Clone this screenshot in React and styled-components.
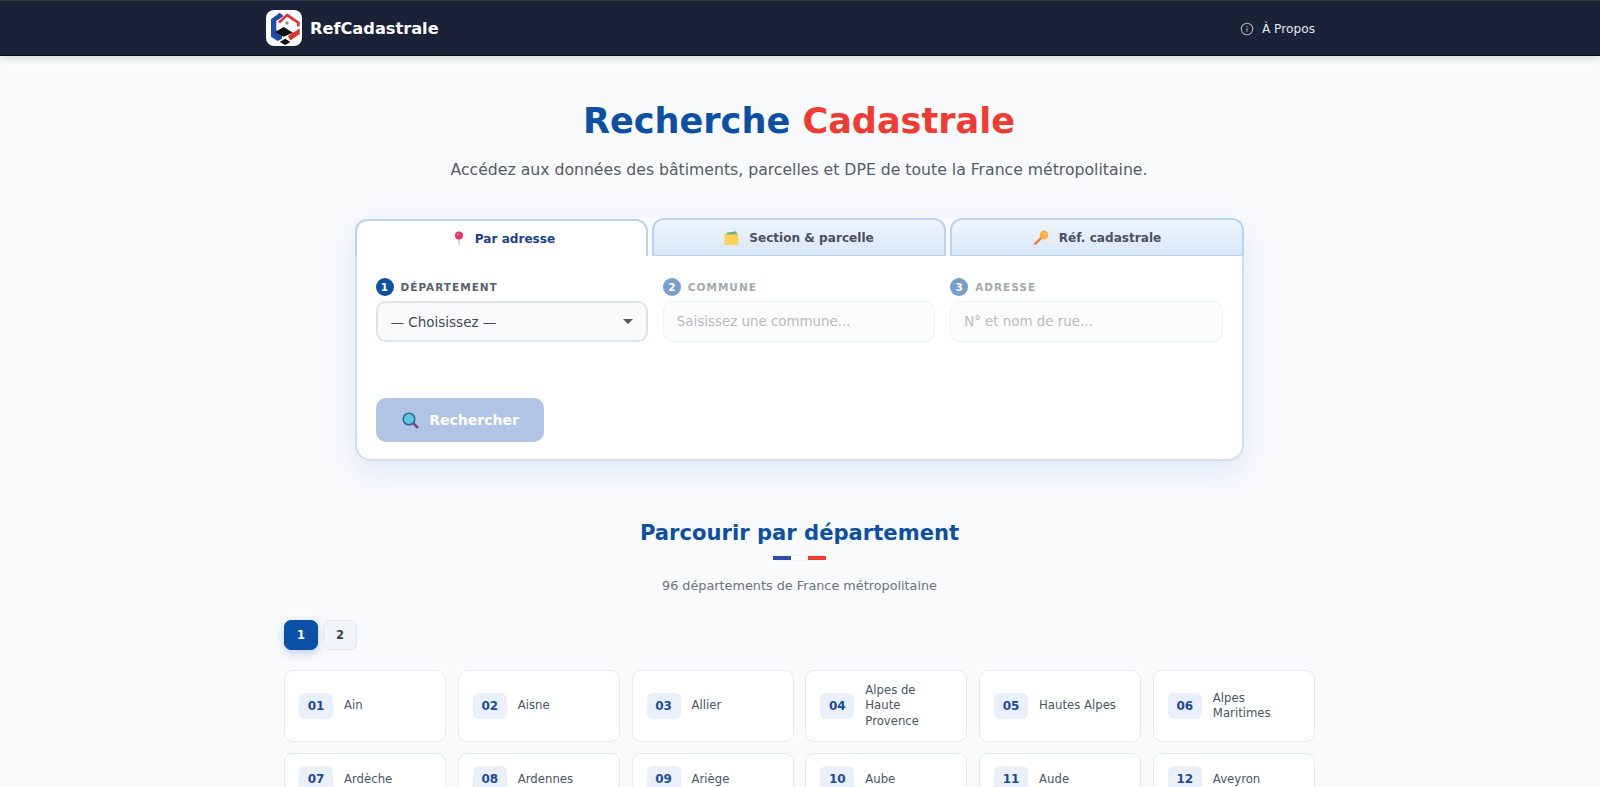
import styled, { createGlobalStyle } from 'styled-components';

const GlobalStyle = createGlobalStyle`
	* {
		box-sizing: border-box;
	}
	html,
	body {
		margin: 0;
		padding: 0;
	}
	body {
		font-family: 'DejaVu Sans', Verdana, sans-serif;
		background: #f8fafc;
		color: #374151;
	}
`;

const departments = [
	['01', 'Ain'],
	['02', 'Aisne'],
	['03', 'Allier'],
	['04', 'Alpes de Haute Provence'],
	['05', 'Hautes Alpes'],
	['06', 'Alpes Maritimes'],
	['07', 'Ardèche'],
	['08', 'Ardennes'],
	['09', 'Ariège'],
	['10', 'Aube'],
	['11', 'Aude'],
	['12', 'Aveyron'],
];

const Logo = () => (
	<LogoBox>
		<svg width="36" height="36" viewBox="0 0 36 36">
			<path fill="#1e4aa8" d="M13.7 2.7L17.7 6 10.3 11V20L16 25.3V28.7L11.7 31 5 26.7V9.3z" />
			<path fill="#e0322c" d="M11.7 12L21 3.3 33.7 12V16L31 16.7V13.3L21 6.7 14.3 13.3z" />
			<path fill="#e0322c" d="M22 26L33.7 18.5V24L24.3 30.5z" />
			<path fill="#8a8f98" d="M19.5 11.5h3v3h-3z" />
			<path fill="#111" d="M9.3 22L17.7 17 27 22.7 17.7 26.7z" />
			<path fill="#111" d="M13.7 32L19.3 28.7 24.3 32 19.3 35z" />
		</svg>
	</LogoBox>
);

const InfoIcon = () => (
	<svg width="14" height="14" viewBox="0 0 16 16" fill="none" stroke="#aeb4bf" strokeWidth="1.2">
		<circle cx="8" cy="8" r="6.6" />
		<path d="M8 7.2v4M8 4.6v1.2" />
	</svg>
);

const PinIcon = () => (
	<svg width="12" height="15" viewBox="0 0 14 18">
		<path fill="#a8aeb6" d="M6.2 8h1.6l-.4 10h-.8z" />
		<circle cx="7" cy="5.4" r="4.8" fill="#ec2f6c" />
		<circle cx="5.6" cy="4" r="1.2" fill="#f78fb0" />
	</svg>
);

const FolderIcon = () => (
	<svg width="15" height="14" viewBox="0 0 16 15">
		<path fill="#e9a93a" d="M1 3.4h14v10.6a1 1 0 01-1 1H2a1 1 0 01-1-1z" />
		<path fill="#6fb26a" d="M3 1.8L13 .4l1 3H2.4z" />
		<path fill="#fcd25c" d="M0.6 4h14.8v10a1 1 0 01-1 1H1.6a1 1 0 01-1-1z" />
	</svg>
);

const KeyIcon = () => (
	<svg width="16" height="16" viewBox="0 0 16 16">
		<path fill="#f0802c" d="M7.4 7L0.6 13.4l1.8 1.8 6.8-6.4z" />
		<circle cx="11" cy="5" r="4.4" fill="#fbb03b" />
		<circle cx="12" cy="3.8" r="1" fill="#fcd98d" />
	</svg>
);

const SearchIcon = () => (
	<svg width="17" height="17" viewBox="0 0 17 17">
		<path stroke="#8a3a88" strokeWidth="2.6" strokeLinecap="round" d="M11 11l4.2 4.2" />
		<circle cx="7" cy="7" r="5.8" fill="#55cbe0" stroke="#3c5f8e" strokeWidth="1.5" />
	</svg>
);

const App = () => {
	return (
		<>
			<GlobalStyle />
			<Page>
				<Navbar>
					<Brand>
						<Logo />
						<BrandName>RefCadastrale</BrandName>
					</Brand>
					<NavLink href="#apropos">
						<InfoIcon />À Propos
					</NavLink>
				</Navbar>

				<Main>
					<Hero>
						<Title>
							<span>Recherche</span> <em>Cadastrale</em>
						</Title>
						<Subtitle>
							Accédez aux données des bâtiments, parcelles et DPE de toute la France métropolitaine.
						</Subtitle>
					</Hero>

					<SearchCard>
						<Tabs>
							<Tab $active>
								<PinIcon />
								Par adresse
							</Tab>
							<Tab>
								<FolderIcon />
								Section &amp; parcelle
							</Tab>
							<Tab>
								<KeyIcon />
								Réf. cadastrale
							</Tab>
						</Tabs>
						<Panel>
							<Fields>
								<Field>
									<FieldLabel>
										<StepDot>1</StepDot>
										Département
									</FieldLabel>
									<SelectBox>
										— Choisissez —
										<Caret />
									</SelectBox>
								</Field>
								<Field $disabled>
									<FieldLabel>
										<StepDot>2</StepDot>
										Commune
									</FieldLabel>
									<TextInput placeholder="Saisissez une commune..." disabled />
								</Field>
								<Field $disabled>
									<FieldLabel>
										<StepDot>3</StepDot>
										Adresse
									</FieldLabel>
									<TextInput placeholder="N° et nom de rue..." disabled />
								</Field>
							</Fields>
							<SearchButton>
								<SearchIcon />
								Rechercher
							</SearchButton>
						</Panel>
					</SearchCard>

					<Browse>
						<BrowseHead>
							<BrowseTitle>Parcourir par département</BrowseTitle>
							<Tricolor>
								<i />
								<i />
								<i />
							</Tricolor>
							<BrowseSub>96 départements de France métropolitaine</BrowseSub>
						</BrowseHead>
						<Pagination>
							<PageButton $active>1</PageButton>
							<PageButton>2</PageButton>
						</Pagination>
						<DeptGrid>
							{departments.map(([code, name]) => (
								<DeptCard key={code}>
									<DeptCode>{code}</DeptCode>
									<DeptName>{name}</DeptName>
								</DeptCard>
							))}
						</DeptGrid>
					</Browse>
				</Main>
			</Page>
		</>
	);
};

export default App;

const Page = styled.div`
	height: 100vh;
	overflow: hidden;
	background: #f8fafc;
`;

const Navbar = styled.header`
	height: 56px;
	padding: 0 285px 0 266px;
	display: flex;
	align-items: center;
	justify-content: space-between;
	background: #1a2238;
	border-top: 1px solid #2b3a3e;
	border-bottom: 1px solid #0b0e16;
	box-shadow: 0 2px 8px rgba(0, 0, 0, 0.15);
`;

const Main = styled.main`
	width: 1598px;
`;

const Brand = styled.div`
	display: flex;
	align-items: center;
	gap: 8px;
`;

const LogoBox = styled.div`
	width: 36px;
	height: 36px;
	background: #fff;
	border-radius: 8px;
	overflow: hidden;

	svg {
		display: block;
	}
`;

const BrandName = styled.span`
	padding-top: 1px;
	font-size: 16.2px;
	font-weight: 700;
	color: #fff;
`;

const NavLink = styled.a`
	display: flex;
	align-items: center;
	gap: 8px;
	padding-top: 1px;
	font-size: 12.2px;
	color: #e2e6ee;
	text-decoration: none;
`;

const Hero = styled.section`
	padding-top: 44px;
	text-align: center;
`;

const Title = styled.h1`
	margin: 0;
	font-size: 35.1px;
	line-height: 42px;
	font-weight: 700;

	span {
		color: #0d4fa3;
	}
	em {
		font-style: normal;
		color: #ef3b32;
	}
`;

const Subtitle = styled.p`
	margin: 17px 0 0;
	font-size: 15.68px;
	line-height: 22px;
	color: #565c66;
`;

const SearchCard = styled.section`
	width: 889px;
	margin: 37px auto 0;
	border-radius: 16px;
	box-shadow: 0 10px 32px rgba(13, 79, 163, 0.1);
`;

const Tabs = styled.div`
	display: grid;
	grid-template-columns: 293px 294px 294px;
	gap: 4px;
	align-items: end;
	height: 38px;
`;

const Tab = styled.button`
	display: flex;
	align-items: center;
	justify-content: center;
	gap: 10px;
	height: ${(p) => (p.$active ? '37px' : '38px')};
	padding: 0 0 0 ${(p) => (p.$active ? '6px' : '1px')};
	font: 700 12.1px 'DejaVu Sans', Verdana, sans-serif;
	color: ${(p) => (p.$active ? '#1e3f8f' : '#4a5160')};
	background: ${(p) => (p.$active ? '#fff' : 'linear-gradient(180deg, #eef5fd 0%, #d9e7f8 100%)')};
	border: 2px solid #bcd3ef;
	border-bottom: ${(p) => (p.$active ? 'none' : '1px solid #bcd3ef')};
	border-radius: 12px 12px 0 0;
`;

const Panel = styled.div`
	padding: 22px 19px 17px;
	background: #fff;
	border: 2px solid #cfe0f4;
	border-top: none;
	border-radius: 0 0 16px 16px;
`;

const Fields = styled.div`
	display: grid;
	grid-template-columns: repeat(3, 1fr);
	column-gap: 15px;
`;

const Field = styled.div`
	opacity: ${(p) => (p.$disabled ? 0.55 : 1)};
`;

const FieldLabel = styled.label`
	display: flex;
	align-items: center;
	gap: 7px;
	height: 18px;
	margin-bottom: 5px;
	font-size: 10.5px;
	font-weight: 700;
	letter-spacing: 1px;
	text-transform: uppercase;
	color: #5a606b;
`;

const StepDot = styled.span`
	width: 18px;
	height: 18px;
	display: inline-flex;
	align-items: center;
	justify-content: center;
	border-radius: 50%;
	background: #0d4fa3;
	color: #fff;
	font-size: 10.5px;
	letter-spacing: 0;
`;

const SelectBox = styled.div`
	position: relative;
	height: 41px;
	padding: 0 13px;
	display: flex;
	align-items: center;
	font-size: 13.5px;
	color: #444b55;
	background: #f8fafb;
	border: 2px solid #dfe3e8;
	border-radius: 10px;
`;

const Caret = styled.span`
	position: absolute;
	right: 13px;
	top: 16px;
	border-left: 5px solid transparent;
	border-right: 5px solid transparent;
	border-top: 5px solid #555;
`;

const TextInput = styled.input`
	width: 100%;
	height: 41px;
	padding: 0 13px;
	font: 13.4px 'DejaVu Sans', Verdana, sans-serif;
	background: #f8fafb;
	border: 1px solid #e2e5ea;
	border-radius: 10px;

	&::placeholder {
		color: #7d828a;
	}
`;

const SearchButton = styled.button`
	display: flex;
	align-items: center;
	justify-content: center;
	gap: 10px;
	width: 168px;
	height: 44px;
	margin-top: 56px;
	padding: 0 0 0 2px;
	font: 700 14px 'DejaVu Sans', Verdana, sans-serif;
	color: #fff;
	background: #b0c4e6;
	border: none;
	border-radius: 10px;
`;

const Browse = styled.section`
	width: 1031px;
	margin: 0 0 0 284px;
	padding-top: 57px;
`;

const BrowseHead = styled.div`
	text-align: center;
`;

const BrowseTitle = styled.h2`
	margin: 0;
	font-size: 21.12px;
	line-height: 30px;
	font-weight: 700;
	color: #0d4fa3;
`;

const Tricolor = styled.div`
	width: 53px;
	height: 4px;
	margin: 8px auto 0;
	display: flex;
	border-radius: 2px;
	box-shadow: 0 0 2px rgba(30, 40, 60, 0.12);

	i {
		flex: 1;
		background: #2e4f9f;
	}
	i:nth-child(2) {
		background: #fff;
	}
	i:nth-child(3) {
		background: #ef3b32;
	}
`;

const BrowseSub = styled.p`
	margin: 17px 0 0;
	font-size: 12.8px;
	line-height: 18px;
	color: #6b7280;
`;

const Pagination = styled.div`
	display: flex;
	gap: 5px;
	margin-top: 25px;
`;

const PageButton = styled.button`
	width: 34px;
	height: 30px;
	padding: 0;
	font: 700 11.5px 'DejaVu Sans', Verdana, sans-serif;
	color: ${(p) => (p.$active ? '#fff' : '#374151')};
	background: ${(p) => (p.$active ? '#0a50a6' : '#f1f4f8')};
	border: 1px solid ${(p) => (p.$active ? '#0a50a6' : '#e5e8ee')};
	border-radius: 7px;
	box-shadow: ${(p) => (p.$active ? '0 3px 8px rgba(13, 79, 163, 0.25)' : 'none')};
`;

const DeptGrid = styled.div`
	display: grid;
	grid-template-columns: repeat(6, 1fr);
	column-gap: 11.6px;
	row-gap: 11px;
	margin-top: 20px;
`;

const DeptCard = styled.a`
	display: flex;
	align-items: center;
	gap: 11px;
	padding: 12px 14px;
	background: #fff;
	border: 1px solid #e6e9ee;
	border-radius: 9px;
`;

const DeptCode = styled.span`
	flex-shrink: 0;
	width: 34px;
	height: 26px;
	display: flex;
	align-items: center;
	justify-content: center;
	font-size: 12px;
	font-weight: 700;
	color: #1e4a9a;
	background: #e9f0fb;
	border-radius: 6px;
`;

const DeptName = styled.span`
	font-size: 11.7px;
	line-height: 15.4px;
	color: #4b5563;
`;
